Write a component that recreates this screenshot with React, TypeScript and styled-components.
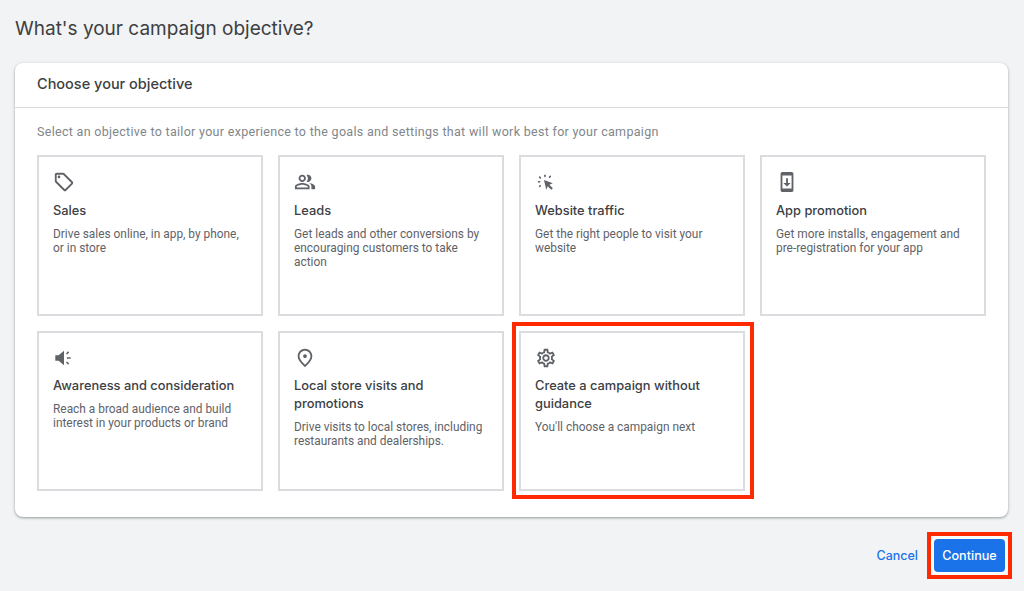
import React from 'react';
import styled, { createGlobalStyle } from 'styled-components';
import {
  MdOutlineLocalOffer,
  MdOutlinePeopleAlt,
  MdOutlineSystemUpdate,
  MdOutlinePlace,
  MdOutlineSettings,
} from 'react-icons/md';

const HEAD_FONT = '"Inter", "Liberation Sans", sans-serif';
const BODY_FONT = 'Roboto, "Liberation Sans", sans-serif';

const GlobalStyle = createGlobalStyle`
  html, body {
    margin: 0;
    padding: 0;
    height: 591px;
    overflow: hidden;
    background: #f1f3f4;
  }
`;

const TrafficIcon = () => (
  <svg width="22" height="22" viewBox="0 0 24 24" fill="currentColor">
    <path d="M9.8 9.8l9.6 3.5-3.7 1.6 3.8 3.8-1.8 1.8-3.8-3.8-1.6 3.7z" />
    <rect x="10" y="3.8" width="1.7" height="3" rx="0.85" />
    <rect x="4.6" y="5.7" width="1.7" height="2.8" rx="0.85" transform="rotate(-45 5.4 7.1)" />
    <rect x="15.4" y="4.9" width="1.7" height="2.8" rx="0.85" transform="rotate(45 16.3 6.3)" />
    <rect x="3" y="10.8" width="3" height="1.7" rx="0.85" />
    <rect x="4.6" y="15" width="1.7" height="2.8" rx="0.85" transform="rotate(45 5.4 16.4)" />
  </svg>
);

const AwarenessIcon = () => (
  <svg width="22" height="22" viewBox="0 0 24 24" fill="currentColor">
    <path d="M2.5 9h3.6l5.9-5v16l-5.9-5H2.5z" />
    <rect x="15" y="11.1" width="4.4" height="1.8" rx="0.5" />
    <rect x="14.2" y="5.6" width="3.4" height="1.7" rx="0.5" transform="rotate(-45 15.9 6.5)" />
    <rect x="14.2" y="16.7" width="3.4" height="1.7" rx="0.5" transform="rotate(45 15.9 17.5)" />
  </svg>
);

const objectives = [
  {
    icon: <MdOutlineLocalOffer size={22} />,
    title: 'Sales',
    text: 'Drive sales online, in app, by phone, or in store',
  },
  {
    icon: <MdOutlinePeopleAlt size={22} />,
    title: 'Leads',
    text: 'Get leads and other conversions by encouraging customers to take action',
  },
  {
    icon: <TrafficIcon />,
    title: 'Website traffic',
    text: 'Get the right people to visit your website',
  },
  {
    icon: <MdOutlineSystemUpdate size={22} />,
    title: 'App promotion',
    text: 'Get more installs, engagement and pre-registration for your app',
  },
  {
    icon: <AwarenessIcon />,
    title: 'Awareness and consideration',
    text: 'Reach a broad audience and build interest in your products or brand',
  },
  {
    icon: <MdOutlinePlace size={22} />,
    title: 'Local store visits and promotions',
    text: 'Drive visits to local stores, including restaurants and dealerships.',
  },
  {
    icon: <MdOutlineSettings size={22} />,
    title: 'Create a campaign without guidance',
    text: "You'll choose a campaign next",
    marked: true,
  },
];

export default function App() {
  return (
    <Page>
      <GlobalStyle />
      <PageTitle>What's your campaign objective?</PageTitle>
      <Panel>
        <PanelHeader>Choose your objective</PanelHeader>
        <PanelBody>
          <Hint>
            Select an objective to tailor your experience to the goals and settings that will
            work best for your campaign
          </Hint>
          <TileGrid>
            {objectives.map((o) => (
              <Tile key={o.title} $marked={o.marked}>
                <TileIcon>{o.icon}</TileIcon>
                <TileTitle>{o.title}</TileTitle>
                <TileText>{o.text}</TileText>
              </Tile>
            ))}
          </TileGrid>
        </PanelBody>
      </Panel>
      <Actions>
        <CancelButton>Cancel</CancelButton>
        <ContinueButton>Continue</ContinueButton>
      </Actions>
    </Page>
  );
}

const Page = styled.div`
  width: 1024px;
  height: 591px;
  box-sizing: border-box;
  padding: 16px 16px 0 15px;
  background: #f1f3f4;
  color: #3c4043;
`;

const PageTitle = styled.h1`
  margin: 0;
  height: 47px;
  font: 400 19px/26px ${HEAD_FONT};
  color: #3c4043;
`;

const Panel = styled.section`
  background: #fff;
  border-radius: 8px;
  box-shadow: 0 1px 2px rgba(60, 64, 67, 0.35), 0 1px 3px 1px rgba(60, 64, 67, 0.12);
  height: 454px;
`;

const PanelHeader = styled.h2`
  margin: 0;
  height: 45px;
  box-sizing: border-box;
  padding: 0 22px;
  border-bottom: 1px solid #dadce0;
  font: 500 14.5px/42px ${HEAD_FONT};
  color: #3c4043;
`;

const PanelBody = styled.div`
  padding: 16px 22px 0;
`;

const Hint = styled.p`
  margin: 0 0 15px;
  font: 400 12.5px/16px ${BODY_FONT};
  letter-spacing: 0.3px;
  color: #80868b;
`;

const TileGrid = styled.div`
  display: grid;
  grid-template-columns: repeat(4, 226px);
  grid-template-rows: 161px 160.5px;
  column-gap: 15px;
  row-gap: 14.5px;
`;

const Tile = styled.div<{ $marked?: boolean }>`
  position: relative;
  box-sizing: border-box;
  padding: 14px;
  border: 2px solid #dadce0;
  background: #fff;

  ${(p) =>
    p.$marked &&
    `
    &::after {
      content: '';
      position: absolute;
      inset: -11px -11px -10px -9px;
      border: 4px solid #ff2a00;
    }
  `}
`;

const TileIcon = styled.div`
  height: 22px;
  margin-bottom: 8.6px;
  color: #5f6368;
  svg {
    display: block;
  }
`;

const TileTitle = styled.div`
  font: 500 12.85px/18px ${HEAD_FONT};
  color: #3c4043;
`;

const TileText = styled.div`
  margin-top: 7px;
  font: 400 11.9px/14px ${BODY_FONT};
  color: #5f6368;
`;

const Actions = styled.div`
  display: flex;
  justify-content: flex-end;
  align-items: center;
  gap: 16px;
  margin-top: 22px;
  padding-right: 3px;
`;

const CancelButton = styled.button`
  border: 0;
  padding: 0;
  background: none;
  font: 500 12.5px/16px ${HEAD_FONT};
  color: #1a73e8;
`;

const ContinueButton = styled.button`
  position: relative;
  width: 71px;
  height: 33px;
  border: 0;
  border-radius: 4px;
  padding: 0;
  background: #1a73e8;
  box-shadow: 0 0 0 3px rgba(255, 255, 255, 0.85);
  font: 500 12.6px/16px ${HEAD_FONT};
  color: #fff;

  &::after {
    content: '';
    position: absolute;
    inset: -7px;
    border: 4px solid #ff2a00;
  }
`;
